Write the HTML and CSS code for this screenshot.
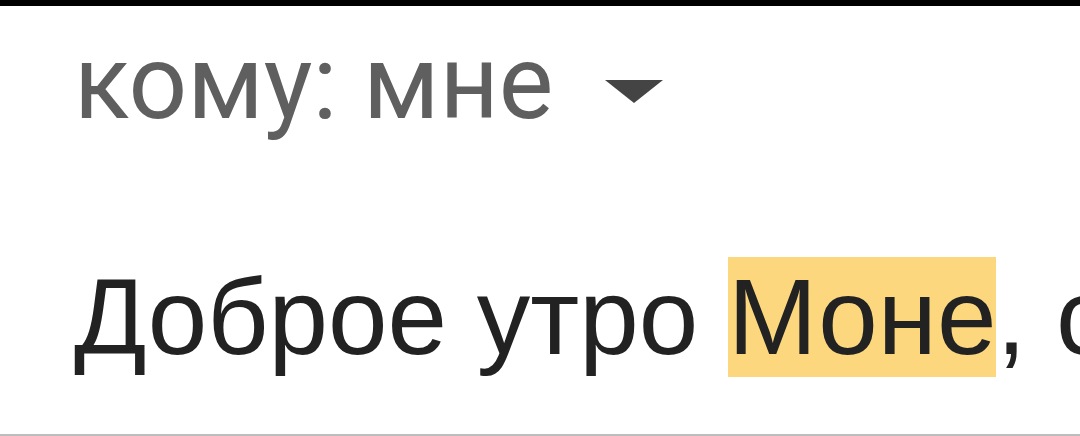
FILE: index.html
```html
<!DOCTYPE html>
<html lang="ru">

<head>
  <meta charset="UTF-8">
  <title>Письмо</title>
  <link rel="stylesheet" href="styles.css">
</head>

<body>
  <div class="screen">
    <div class="top-bar"></div>
    <div class="mail">
      <div class="recipient">
        <span class="recipient-text">кому: мне</span>
        <span class="caret"></span>
      </div>
      <div class="mail-body">Доброе утро <span class="hl">Моне</span>, с</div>
    </div>
  </div>
</body>

</html>
```

FILE: styles.css
```css
/* Reset */
* {
  margin: 0;
  padding: 0;
  box-sizing: border-box;
}

html,
body {
  height: 100%;
  background: #fff;
  font-family: Roboto, "Liberation Sans", Arial, sans-serif;
}

.screen {
  height: 436px;
  width: 1080px;
  overflow: hidden;
  display: flex;
  flex-direction: column;
  border-bottom: 2px solid #bdbdbd;
}

/* black strip along the top edge */
.top-bar {
  height: 6px;
  background: #000;
}

.mail {
  flex: 1;
  padding-left: 74px;
  white-space: nowrap;
}

.recipient {
  display: flex;
  align-items: flex-start;
  height: 122px;
  padding-top: 25px;
  color: #5f5f5f;
}

.recipient-text {
  font-size: 103px;
  line-height: 1;
}

/* small down triangle */
.caret {
  margin-left: 52px;
  margin-top: 49px;
  width: 0;
  height: 0;
  border-left: 29px solid transparent;
  border-right: 29px solid transparent;
  border-top: 23px solid #444;
}

/* message text is rendered in an Arial-like face */
.mail-body {
  margin-top: 136px;
  font-family: "Liberation Sans", Arial, sans-serif;
  font-size: 107px;
  line-height: 1;
  color: #222;
}

.hl {
  background: #fcd77e;
}
```
